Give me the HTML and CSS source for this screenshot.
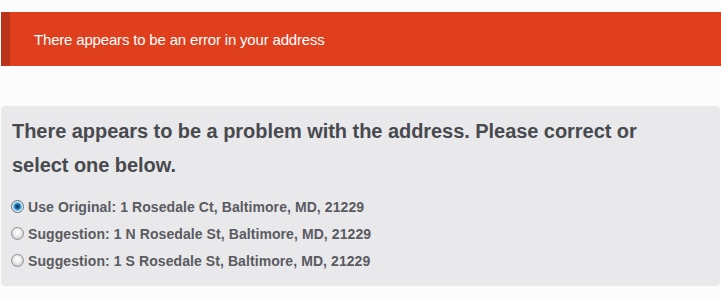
FILE: index.html
```html
<!DOCTYPE html>
<html>
<head>
<meta charset="utf-8">
<link rel="stylesheet" href="styles.css">
</head>
<body>
<div class="alert">There appears to be an error in your address</div>
<div class="panel">
  <h2 class="panel-title">There appears to be a problem with the address. Please correct or select one below.</h2>
  <label class="option"><input type="radio" name="addr" checked><span>Use Original: 1 Rosedale Ct, Baltimore, MD, 21229</span></label>
  <label class="option"><input type="radio" name="addr"><span>Suggestion: 1 N Rosedale St, Baltimore, MD, 21229</span></label>
  <label class="option"><input type="radio" name="addr"><span>Suggestion: 1 S Rosedale St, Baltimore, MD, 21229</span></label>
</div>
</body>
</html>
```
FILE: styles.css
```css
html, body {
  margin: 0;
  padding: 0;
  background: #fcfcfc;
  font-family: "Liberation Sans", Arial, sans-serif;
}
body {
  padding-top: 12px;
}
.alert {
  margin-left: 1px;
  height: 54px;
  display: flex;
  align-items: center;
  background: #e03f1e;
  border-left: 9px solid #b9341a;
  padding-left: 24px;
  color: #ffffff;
  font-size: 15px;
  letter-spacing: -0.18px;
}
.panel {
  margin: 40px 1px 0 1px;
  background: #e9e8ea;
  border-radius: 4px;
  padding: 8px 26px 12px 10px;
  height: 180px;
  box-sizing: border-box;
}
.panel-title {
  margin: 0 0 11px 1px;
  font-size: 20px;
  line-height: 34px;
  font-weight: bold;
  color: #474a4f;
  letter-spacing: -0.05px;
}
.option {
  display: flex;
  align-items: center;
  height: 27px;
  font-size: 14px;
  font-weight: bold;
  color: #595b61;
  letter-spacing: 0.08px;
}
.option input {
  appearance: none;
  -webkit-appearance: none;
  width: 13px;
  height: 13px;
  margin: 0 4px 0 0;
  border-radius: 50%;
  border: 1px solid #8e8f92;
  box-sizing: border-box;
  background: radial-gradient(circle at 50% 40%, #ffffff 0, #f2f2f2 3px, #d4d4d6 6px);
}
.option input:checked {
  border-color: #5a6f80;
  background: radial-gradient(circle, #0d2f4d 0, #1c5a8a 2px, #3f9fdc 3.2px, #8cc8ec 4.2px, #e8f3fa 5px);
}
```
